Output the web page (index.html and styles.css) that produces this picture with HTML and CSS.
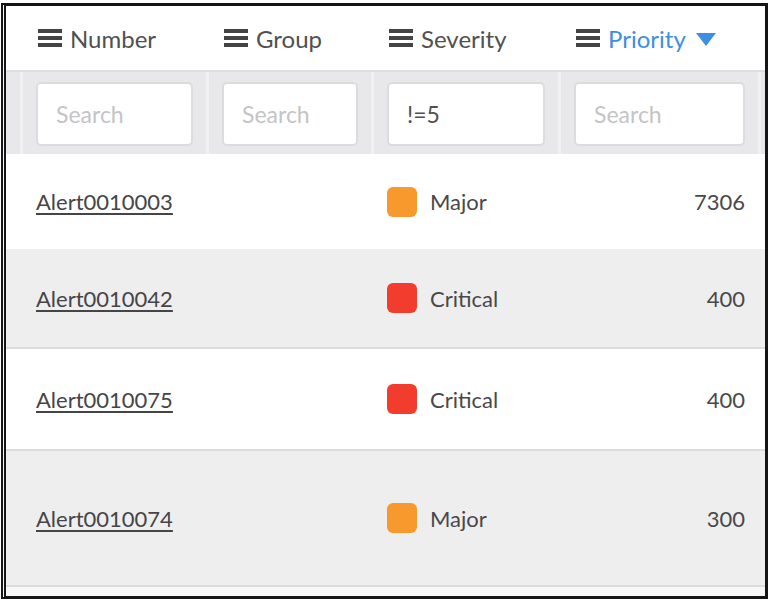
FILE: index.html
```html
<!DOCTYPE html>
<html lang="en">
<head>
  <meta charset="UTF-8" />
  <title>Alerts</title>
  <link rel="stylesheet" href="styles.css">
</head>
<body>
  <div class="frame">
    <div class="row head">
      <div class="cell"><span class="menu"></span>Number</div>
      <div class="cell"><span class="menu"></span>Group</div>
      <div class="cell"><span class="menu"></span>Severity</div>
      <div class="cell sorted"><span class="menu"></span>Priority <span class="arrow"></span></div>
    </div>
    <div class="row filters">
      <div class="cell"><input type="text" placeholder="Search"></div>
      <div class="cell"><input type="text" placeholder="Search"></div>
      <div class="cell"><input type="text" value="!=5"></div>
      <div class="cell"><input type="text" placeholder="Search"></div>
    </div>
    <div class="row item r1">
      <div class="cell"><a href="#">Alert0010003</a></div>
      <div class="cell"></div>
      <div class="cell"><span class="sev major"></span>Major</div>
      <div class="cell num">7306</div>
    </div>
    <div class="row item r2 odd">
      <div class="cell"><a href="#">Alert0010042</a></div>
      <div class="cell"></div>
      <div class="cell"><span class="sev critical"></span>Critical</div>
      <div class="cell num">400</div>
    </div>
    <div class="row item r3">
      <div class="cell"><a href="#">Alert0010075</a></div>
      <div class="cell"></div>
      <div class="cell"><span class="sev critical"></span>Critical</div>
      <div class="cell num">400</div>
    </div>
    <div class="row item r4 odd">
      <div class="cell"><a href="#">Alert0010074</a></div>
      <div class="cell"></div>
      <div class="cell"><span class="sev major"></span>Major</div>
      <div class="cell num">300</div>
    </div>
  </div>
</body>
</html>
```

FILE: styles.css
```css
* { box-sizing: border-box; }
html, body {
  margin: 0; padding: 0; background: #fff;
  font-family: 'Lato', 'Liberation Sans', sans-serif; color: #4a4a4c;
}
.frame {
  margin: 3px 5px 6px 1px; height: 596px;
  border: 3px solid #151515; border-left: 5px double #151515;
  background: #f7f7f8; overflow: hidden;
}
.row {
  display: grid; grid-template-columns: 186px 165px 187px 1fr;
  padding-left: 14px; padding-right: 4px; align-items: center;
}
.cell { padding-left: 16px; display: flex; align-items: center; }

/* header */
.head {
  height: 66px; background: #fff; border-bottom: 2px solid #dedee0;
  font-size: 24px; color: #505052;
}
.head .cell { padding-left: 18px; }
.menu {
  width: 24px; height: 18px; margin-right: 8px; flex: none;
  background: linear-gradient(#444 0 4px, transparent 4px 7px, #444 7px 11px, transparent 11px 14px, #444 14px 18px);
}
.sorted { color: #3c8fe3; }
.arrow {
  width: 0; height: 0; margin-left: 10px; margin-top: 3px;
  border-left: 10px solid transparent; border-right: 10px solid transparent;
  border-top: 13px solid #3c8fe3;
}

/* filters */
.filters { height: 82px; background: #e8e8ea; align-items: stretch; }
.filters .cell {
  border-left: 3px solid #f1f1f3; padding: 10px 13px 8px 13px;
}
.filters .cell:last-child { border-right: 3px solid #f1f1f3; }
.filters input {
  width: 100%; height: 64px; border: 2px solid #dcdcde; border-radius: 5px;
  background: #fff; padding: 0 0 0 18px;
  font-family: inherit; font-size: 23px; color: #505052;
}
.filters input::placeholder { color: #c4c4c6; }

/* data rows */
.item { font-size: 22px; background: #fff; color: #48484a; }
.item.odd { background: #eeeeef; }
.r1 { height: 95px; }
.r2 { height: 98px; }
.r3 { height: 102px; border-top: 2px solid #dcdcde; }
.r4 { height: 138px; border-top: 2px solid #dcdcde; border-bottom: 2px solid #dcdcde; }
.item a {
  color: #454547; text-decoration: underline; text-decoration-thickness: 2px;
  text-underline-offset: 3px;
}
.sev {
  width: 30px; height: 30px; border-radius: 6px; margin-right: 13px; flex: none;
}
.sev.major { background: #f8992d; }
.sev.critical { background: #f23d2e; }
.num { justify-content: flex-end; padding-right: 16px; }
```
